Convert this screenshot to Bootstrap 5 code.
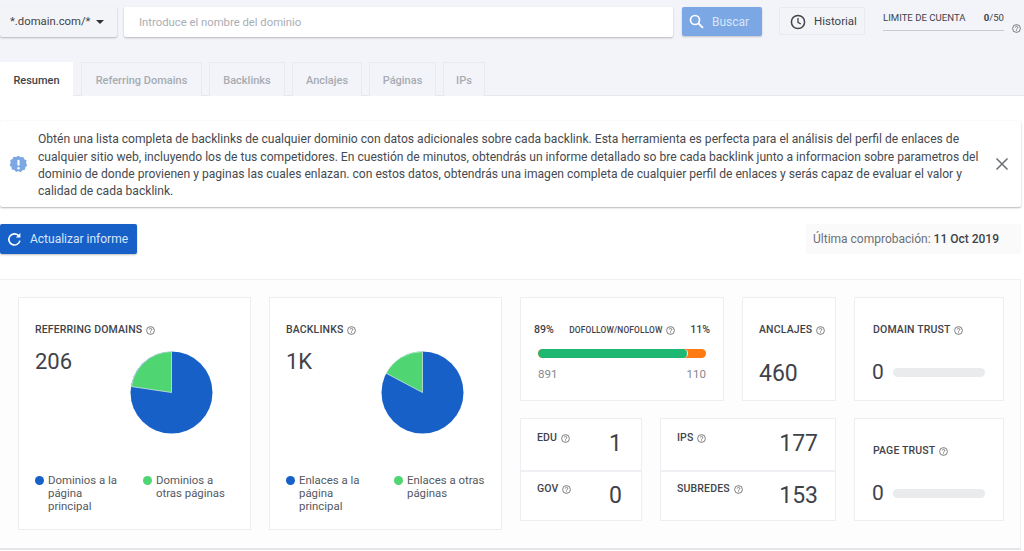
<!DOCTYPE html>
<html lang="es">
<head>
  <meta charset="UTF-8">
  <meta name="viewport" content="width=device-width, initial-scale=1.0">
  <title>Backlinks | Resumen</title>
  <link href="https://cdn.jsdelivr.net/npm/bootstrap@5.3.3/dist/css/bootstrap.min.css" rel="stylesheet">
  <style>
    body { font-family: Roboto, "Liberation Sans", sans-serif; color: #3f4349; background: #fff; height: 551px; overflow: hidden; font-size: 12px; }
    .top-zone { background: #f2f4f9; height: 96px; padding-top: 7px; }
    .search-row { height: 30px; }
    .search-row > * { flex: none; }
    .domain-btn { width: 117px; height: 30px; background: #f3f4f7; border: 0; border-radius: 2px; box-shadow: 0 1px 2px rgba(0,0,0,.25); font-size: 11.3px; color: #3f4349; padding: 0 0 0 10px; }
    .domain-btn::after { margin-left: 6px; vertical-align: 1px; color: #333; border-top-width: 4.5px; border-left-width: 4.5px; border-right-width: 4.5px; }
    .domain-input { width: 549px; height: 30px; margin-left: 7px; border: 0; border-radius: 2px; box-shadow: 0 1px 2px rgba(0,0,0,.25); font-size: 11.3px; padding: 0 15px; }
    .domain-input::placeholder { color: #a9adb4; }
    .find-btn { width: 80px; height: 29px; margin-left: 9px; background: #7ba7e4; border: 0; border-radius: 2px; color: #d8e6f8; font-size: 12px; padding: 0 0 0 7px; box-shadow: 0 1px 2px rgba(0,0,0,.2); }
    .history-btn { width: 86px; height: 28px; margin-left: 17px; background: #f3f4f8; border: 1px solid #e8eaf0; border-radius: 2px; color: #3f4349; font-size: 11.5px; padding: 2px 0 0 10px; }
    .limit-box { width: 121px; height: 24px; margin-left: 18px; border-bottom: 1px solid #c9cbd0; font-size: 9.6px; line-height: 21px; color: #3f4349; }
    .limit-help { margin-left: 8px; margin-top: 17px; }
    .tabs-line { margin-top: 25px; border-bottom: 1px solid #e6e8ee; gap: 7px; height: 34px; }
    .tabs-line .nav-link { height: 34px; margin: 0; background: #f2f4f9; border: 1px solid #e8eaf0; border-bottom: 0; border-radius: 0; color: #a7abb2; font-size: 11px; font-weight: 500; padding: 10px 0 0; text-align: center; }
    .tabs-line .nav-link.active { background: #fff; color: #3f4349; border-color: #fff; width: 73px; }
    .tab-a { width: 121px; margin-left: 1px !important; } .tab-b { width: 76px; } .tab-c { width: 70px; } .tab-d { width: 67px; } .tab-e { width: 42px; }
    .info-box { width: 1021px; height: 86px; margin-top: 25px; padding-left: 9px; background: #fff; border-radius: 2px; box-shadow: 0 1px 2px rgba(0,0,0,.28), 0 0 1px rgba(0,0,0,.08); font-size: 12.1px; line-height: 17.4px; color: #464a50; }
    .info-text { margin: 4px 0 0 10px; width: 930px; white-space: nowrap; }
    .close-x { margin-left: auto; margin-right: 12px; background: none; border: 0; padding: 0; line-height: 0; }
    .action-row { width: 1021px; margin-top: 17px; height: 30px; }
    .refresh-btn { width: 137px; height: 30px; background: #1660c8; border: 0; border-radius: 2px; color: #d9e6f8; font-size: 12px; padding: 0 0 0 7px; box-shadow: 0 1px 2px rgba(0,0,0,.25); }
    .refresh-btn:hover { background: #1660c8; color: #d9e6f8; }
    .last-check { width: 215px; height: 30px; background: #fafafa; color: #6d7076; font-size: 12px; padding-left: 7px; line-height: 31px; }
    .last-check b { color: #3f4349; font-weight: 500; }
    .stats-panel { width: 1021px; height: 271px; margin-top: 25px; padding: 17px 18px; background: #fdfdfd; border-top: 1px solid #f2f2f4; border-bottom: 2px solid #e4e5e8; border-right: 1px solid #eeeff2; gap: 18px; }
    .stat-box { background: #fff; border: 1px solid #eceef2; border-radius: 0; }
    .big-box { width: 233px; height: 233px; padding: 25px 16px 0; }
    .stat-label { font-size: 10.5px; font-weight: 500; color: #3f4349; letter-spacing: .15px; line-height: 14px; white-space: nowrap; }
    .stat-label svg { margin-left: 1px; vertical-align: -1.5px; }
    .big-num { width: 37px; font-size: 22px; line-height: 26px; color: #3f4349; margin-top: 12px; flex: none; }
    .pie-wrap { margin-left: 58px; margin-top: 14px; flex: none; }
    .pie-row { height: 137px; }
    .legend-row { font-size: 11.4px; line-height: 13px; color: #55595f; }
    .legend-item { width: 108px; flex: none; }
    .legend-text { max-width: 79px; }
    .legend-dot { width: 9px; height: 9px; border-radius: 50%; flex: none; margin: 2px 4px 0 0; }
    .dot-blue { background: #1660c8; } .dot-green { background: #4fd672; }
    .right-side { width: 484px; gap: 17px; }
    .side-row { gap: 18px; }
    .row-one .stat-box { height: 104px; }
    .follow-box { width: 204px; padding: 25px 13px 0 13px; }
    .follow-head { font-size: 10.6px; font-weight: 500; line-height: 14px; }
    .follow-head .stat-label { font-size: 8.4px; }
    .follow-bar { height: 9px; margin: 12px 4px 0 4px; background: #ff7a12; border-radius: 5px; }
    .follow-bar .progress-bar { background: #1eb872; border-right: 1px solid #fff; border-radius: 5px; }
    .follow-nums { margin: 8px 4px 0 4px; font-size: 11.5px; line-height: 16px; color: #85888e; }
    .anchor-box { width: 94px; padding: 25px 0 0 16px; }
    .anchor-num { font-size: 23px; line-height: 26px; margin-top: 24px; color: #3f4349; }
    .trust-box { width: 150px; padding: 25px 17px 0 18px; }
    .trust-num { font-size: 21px; line-height: 26px; color: #3f4349; margin-left: -1px; }
    .trust-row { margin-top: 22px; }
    .trust-bar { height: 9px; width: 92px; margin-left: 9px; background: #eaebed; border-radius: 5px; }
    .row-two { height: 103px; }
    .double-box { border: 1px solid #eceef2; background: #fff; }
    .edu-stack { width: 122px; } .ips-stack { width: 176px; }
    .cell-box { height: 51px; padding: 12px 17px 0 16px; }
    .edu-stack .cell-box { padding-right: 19px; }
    .cell-box + .cell-box { border-top: 2px solid #eef0f4; padding-top: 10px; }
    .cell-num { font-size: 23px; line-height: 26px; color: #3f4349; }
    .cell-box + .cell-box .cell-num { margin-top: 1px; }
    .page-box { padding-top: 25px; height: 103px; }
  </style>
</head>

<body>

<svg width="0" height="0" class="d-block position-absolute">
  <symbol id="help" viewBox="0 0 12 12">
    <circle cx="6" cy="6" r="5.2" fill="none" stroke="#555" stroke-width="1"/>
    <path d="M4.3 4.8a1.7 1.7 0 1 1 2.6 1.4c-.6.4-.9.7-.9 1.3" fill="none" stroke="#555" stroke-width="1"/>
    <circle cx="6" cy="9" r=".65" fill="#555"/>
  </symbol>
</svg>

<!-- Search zone and tabs -->
<div class="top-zone">
  <div class="search-row d-flex align-items-start">
    <button class="domain-btn dropdown-toggle text-start" type="button">*.domain.com/*</button>
    <input class="domain-input form-control" type="text" placeholder="Introduce el nombre del dominio">
    <button class="find-btn btn d-flex align-items-center gap-2" type="button">
      <svg width="15" height="15" viewBox="0 0 14 14"><circle cx="5.6" cy="5.6" r="4.2" fill="none" stroke="#fff" stroke-width="1.6"/><path d="M8.8 8.8l4.2 4.2" stroke="#fff" stroke-width="1.8"/></svg>
      Buscar
    </button>
    <button class="history-btn btn d-flex align-items-center gap-2" type="button">
      <svg width="16" height="16" viewBox="0 0 16 16"><circle cx="8" cy="8" r="6.6" fill="none" stroke="#444" stroke-width="1.5"/><path d="M8 4v4.3l2.8 1.7" fill="none" stroke="#444" stroke-width="1.3"/></svg>
      Historial
    </button>
    <div class="limit-box d-flex justify-content-between">
      <span>LIMITE DE CUENTA</span><span><b class="fw-bold">0</b>/50</span>
    </div>
    <svg class="limit-help" width="9" height="9"><use href="#help"/></svg>
  </div>

  <ul class="nav tabs-line">
    <li class="nav-item"><a class="nav-link active" href="#">Resumen</a></li>
    <li class="nav-item"><a class="nav-link tab-a" href="#">Referring Domains</a></li>
    <li class="nav-item"><a class="nav-link tab-b" href="#">Backlinks</a></li>
    <li class="nav-item"><a class="nav-link tab-c" href="#">Anclajes</a></li>
    <li class="nav-item"><a class="nav-link tab-d" href="#">Páginas</a></li>
    <li class="nav-item"><a class="nav-link tab-e" href="#">IPs</a></li>
  </ul>
</div>

<!-- Notice -->
<div class="info-box d-flex align-items-center">
  <svg width="19" height="19" viewBox="0 0 19 19" class="flex-shrink-0">
    <path d="M9.5 .8l2.2 1.4 2.6-.3 1 2.4 2.3 1.2-.5 2.6 1.1 2.3-1.9 1.8-.3 2.6-2.6.5-1.7 2-2.2-1.2-2.4 1-1.7-2-2.6-.5-.3-2.6-1.9-1.8 1.1-2.3-.5-2.6 2.3-1.2 1-2.4 2.6.3z" fill="#7ba7e4"/>
    <rect x="8.4" y="4.8" width="2.2" height="6" rx="1" fill="#fff"/><circle cx="9.5" cy="13.2" r="1.2" fill="#fff"/>
  </svg>
  <div class="info-text">
    Obtén una lista completa de backlinks de cualquier dominio con datos adicionales sobre cada backlink. Esta herramienta es perfecta para el análisis del perfil de enlaces de<br>
    cualquier sitio web, incluyendo los de tus competidores. En cuestión de minutos, obtendrás un informe detallado so bre cada backlink junto a informacion sobre parametros del<br>
    dominio de donde provienen y paginas las cuales enlazan. con estos datos, obtendrás una imagen completa de cualquier perfil de enlaces y serás capaz de evaluar el valor y<br>
    calidad de cada backlink.
  </div>
  <button class="close-x" type="button" aria-label="Cerrar">
    <svg width="14" height="14" viewBox="0 0 14 14"><path d="M1.5 1.5l11 11M12.5 1.5l-11 11" stroke="#6f7378" stroke-width="1.6"/></svg>
  </button>
</div>

<!-- Refresh row -->
<div class="action-row d-flex justify-content-between">
  <button class="refresh-btn btn d-flex align-items-center gap-2" type="button">
    <svg width="15" height="15" viewBox="0 0 15 15"><path d="M12.9 8.6A5.6 5.6 0 1 1 11.3 3.4" fill="none" stroke="#fff" stroke-width="1.6"/><path d="M13.4 .9v4.5H8.9z" fill="#fff"/></svg>
    Actualizar informe
  </button>
  <div class="last-check">Última comprobación: <b>11 Oct 2019</b></div>
</div>

<!-- Stats -->
<div class="stats-panel d-flex">
  <div class="stat-box big-box">
    <div class="stat-label">REFERRING DOMAINS <svg width="9" height="9"><use href="#help"/></svg></div>
    <div class="pie-row d-flex align-items-start">
      <div class="big-num">206</div>
      <svg class="pie-wrap" width="83" height="83" viewBox="0 0 84 84">
        <circle cx="42" cy="42" r="41.5" fill="#1660c8"/>
        <path d="M42 42V.5A41.5 41.5 0 0 0 1.4 36z" fill="#4fd672" stroke="#e8f0ea" stroke-width=".7"/>
      </svg>
    </div>
    <div class="legend-row d-flex">
      <div class="legend-item d-flex"><span class="legend-dot dot-blue"></span><span class="legend-text">Dominios a la página principal</span></div>
      <div class="legend-item d-flex"><span class="legend-dot dot-green"></span><span class="legend-text">Dominios a otras páginas</span></div>
    </div>
  </div>

  <div class="stat-box big-box">
    <div class="stat-label">BACKLINKS <svg width="9" height="9"><use href="#help"/></svg></div>
    <div class="pie-row d-flex align-items-start">
      <div class="big-num">1K</div>
      <svg class="pie-wrap" width="83" height="83" viewBox="0 0 84 84">
        <circle cx="42" cy="42" r="41.5" fill="#1660c8"/>
        <path d="M42 42V.5A41.5 41.5 0 0 0 5.3 22.6z" fill="#4fd672" stroke="#e8f0ea" stroke-width=".7"/>
      </svg>
    </div>
    <div class="legend-row d-flex">
      <div class="legend-item d-flex"><span class="legend-dot dot-blue"></span><span class="legend-text">Enlaces a la página principal</span></div>
      <div class="legend-item d-flex"><span class="legend-dot dot-green"></span><span class="legend-text">Enlaces a otras páginas</span></div>
    </div>
  </div>

  <div class="right-side d-flex flex-column">
    <div class="side-row row-one d-flex">
      <div class="stat-box follow-box">
        <div class="follow-head d-flex justify-content-between align-items-center">
          <span>89%</span>
          <span class="stat-label">DOFOLLOW/NOFOLLOW <svg width="9" height="9"><use href="#help"/></svg></span>
          <span>11%</span>
        </div>
        <div class="follow-bar progress">
          <div class="progress-bar" style="width: 89%"></div>
        </div>
        <div class="follow-nums d-flex justify-content-between"><span>891</span><span>110</span></div>
      </div>
      <div class="stat-box anchor-box">
        <div class="stat-label">ANCLAJES <svg width="9" height="9"><use href="#help"/></svg></div>
        <div class="anchor-num">460</div>
      </div>
      <div class="stat-box trust-box">
        <div class="stat-label">DOMAIN TRUST <svg width="9" height="9"><use href="#help"/></svg></div>
        <div class="trust-row d-flex align-items-center">
          <span class="trust-num">0</span><div class="trust-bar"></div>
        </div>
      </div>
    </div>

    <div class="side-row row-two d-flex">
      <div class="double-box edu-stack">
        <div class="cell-box d-flex justify-content-between">
          <div class="stat-label">EDU <svg width="9" height="9"><use href="#help"/></svg></div>
          <div class="cell-num">1</div>
        </div>
        <div class="cell-box d-flex justify-content-between">
          <div class="stat-label">GOV <svg width="9" height="9"><use href="#help"/></svg></div>
          <div class="cell-num">0</div>
        </div>
      </div>
      <div class="double-box ips-stack">
        <div class="cell-box d-flex justify-content-between">
          <div class="stat-label">IPS <svg width="9" height="9"><use href="#help"/></svg></div>
          <div class="cell-num">177</div>
        </div>
        <div class="cell-box d-flex justify-content-between">
          <div class="stat-label">SUBREDES <svg width="9" height="9"><use href="#help"/></svg></div>
          <div class="cell-num">153</div>
        </div>
      </div>
      <div class="stat-box trust-box page-box">
        <div class="stat-label">PAGE TRUST <svg width="9" height="9"><use href="#help"/></svg></div>
        <div class="trust-row d-flex align-items-center">
          <span class="trust-num">0</span><div class="trust-bar"></div>
        </div>
      </div>
    </div>
  </div>
</div>

<script src="https://cdn.jsdelivr.net/npm/bootstrap@5.3.3/dist/js/bootstrap.bundle.min.js"></script>
</body>
</html>
